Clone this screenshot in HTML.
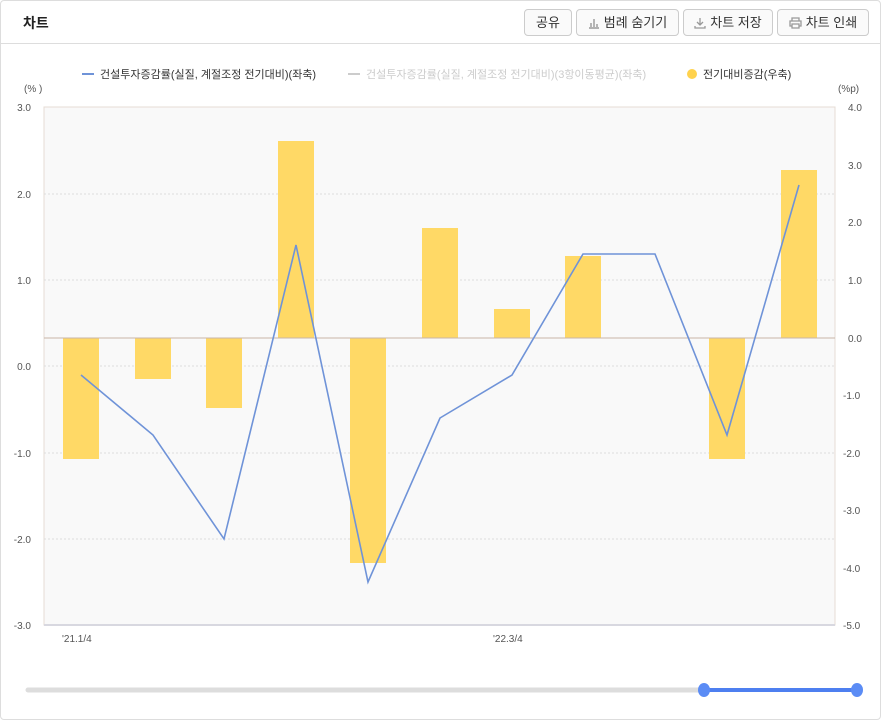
<!DOCTYPE html>
<html><head><meta charset="utf-8"><style>
body{margin:0;width:881px;height:720px;background:#fff;font-family:"Liberation Sans","Noto Sans CJK KR",sans-serif;overflow:hidden}
.frame{position:absolute;left:0;top:0;width:879px;height:718px;border:1px solid #ddd;border-radius:4px}
.hdr{position:absolute;left:0;top:0;width:881px;height:43px;border-bottom:1px solid #ddd}
.title{position:absolute;left:23px;top:13px;font-size:14px;font-weight:bold;color:#222}
.btn{position:absolute;top:9px;border:1px solid #ccc;border-radius:4px;background:#fafafa;font-size:13px;color:#333;line-height:25px;text-align:center;box-sizing:border-box;height:27px;font-weight:normal}
.btn svg{vertical-align:-2px;margin-right:4px}
.lg{position:absolute;top:66px;font-size:11px;color:#333}
.ax{position:absolute;font-size:10px;color:#555}
</style></head><body>
<div class="frame"></div>
<div class="hdr"></div>
<div class="title">차트</div>
<div class="btn" style="left:524px;width:48px">공유</div>
<div class="btn" style="left:576px;width:103px"><svg width="12" height="12" viewBox="0 0 12 12"><path d="M1 11H11M3 10V6M6 10V2M9 10V7" stroke="#999" stroke-width="1.4" fill="none"/></svg>범례 숨기기</div>
<div class="btn" style="left:683px;width:90px"><svg width="12" height="12" viewBox="0 0 12 12"><path d="M6 1V8M3 5L6 8L9 5M1 9V11H11V9" stroke="#999" stroke-width="1.3" fill="none"/></svg>차트 저장</div>
<div class="btn" style="left:777px;width:92px"><svg width="13" height="12" viewBox="0 0 13 12"><path d="M3 4V1H10V4M3 9H1V4H12V9H10M3 7H10V11H3Z" stroke="#999" stroke-width="1.3" fill="none"/></svg>차트 인쇄</div>
<div class="lg" style="left:82px"><span style="display:inline-block;width:12px;height:2px;background:#6f93d8;vertical-align:3px;margin-right:6px"></span>건설투자증감률(실질, 계절조정 전기대비)(좌축)</div>
<div class="lg" style="left:348px;color:#ccc"><span style="display:inline-block;width:12px;border-top:2px dashed #ccc;vertical-align:3px;margin-right:6px"></span>건설투자증감률(실질, 계절조정 전기대비)(3항이동평균)(좌축)</div>
<div class="lg" style="left:687px"><span style="display:inline-block;width:10px;height:10px;border-radius:5px;background:#ffd24d;vertical-align:-1px;margin-right:6px"></span>전기대비증감(우축)</div>
<div class="ax" style="left:24px;top:84px">(% )</div>
<div class="ax" style="left:838px;top:84px">(%p)</div>
<svg width="881" height="720" style="position:absolute;left:0;top:0" font-family="Liberation Sans,sans-serif" font-size="10" fill="#555">
<rect x="44" y="107" width="791" height="518" fill="#f9f9f9" stroke="#e6dcd5"/>
<line x1="44" y1="625" x2="835" y2="625" stroke="#d8d8e0" stroke-width="2"/>
<g stroke="#ddd" stroke-dasharray="2,2">
<line x1="44" x2="835" y1="194" y2="194"/><line x1="44" x2="835" y1="280" y2="280"/><line x1="44" x2="835" y1="366" y2="366"/><line x1="44" x2="835" y1="453" y2="453"/><line x1="44" x2="835" y1="539" y2="539"/>
</g>
<g fill="#ffd966">
<rect x="63" y="338" width="36" height="121"/><rect x="135" y="338" width="36" height="41"/><rect x="206" y="338" width="36" height="70"/><rect x="278" y="141" width="36" height="197"/><rect x="350" y="338" width="36" height="225"/><rect x="422" y="228" width="36" height="110"/><rect x="494" y="309" width="36" height="29"/><rect x="565" y="256" width="36" height="82"/><rect x="709" y="338" width="36" height="121"/><rect x="781" y="170" width="36" height="168"/>
</g>
<line x1="44" x2="835" y1="338" y2="338" stroke="#c9b5a8"/>
<polyline fill="none" stroke="#6f93d8" stroke-width="1.6" points="81,375 153,435 224,539 296,245 368,582 440,418 512,375 583,254 655,254 727,435 799,185"/>
<g text-anchor="end"><text x="31" y="111">3.0</text><text x="31" y="198">2.0</text><text x="31" y="284">1.0</text><text x="31" y="370">0.0</text><text x="31" y="457">-1.0</text><text x="31" y="543">-2.0</text><text x="31" y="629">-3.0</text></g>
<g><text x="848" y="111">4.0</text><text x="848" y="169">3.0</text><text x="848" y="226">2.0</text><text x="848" y="284">1.0</text><text x="848" y="342">0.0</text><text x="843" y="399">-1.0</text><text x="843" y="457">-2.0</text><text x="843" y="514">-3.0</text><text x="843" y="572">-4.0</text><text x="843" y="629">-5.0</text></g>
<text x="62" y="642">'21.1/4</text><text x="493" y="642">'22.3/4</text>
<line x1="28" y1="690" x2="704" y2="690" stroke="#ddd" stroke-width="5" stroke-linecap="round"/>
<line x1="704" y1="690" x2="857" y2="690" stroke="#4d7ff0" stroke-width="4"/>
<ellipse cx="704" cy="690" rx="6" ry="7" fill="#5b8cf5"/><ellipse cx="857" cy="690" rx="6" ry="7" fill="#5b8cf5"/>
</svg>
</body></html>
